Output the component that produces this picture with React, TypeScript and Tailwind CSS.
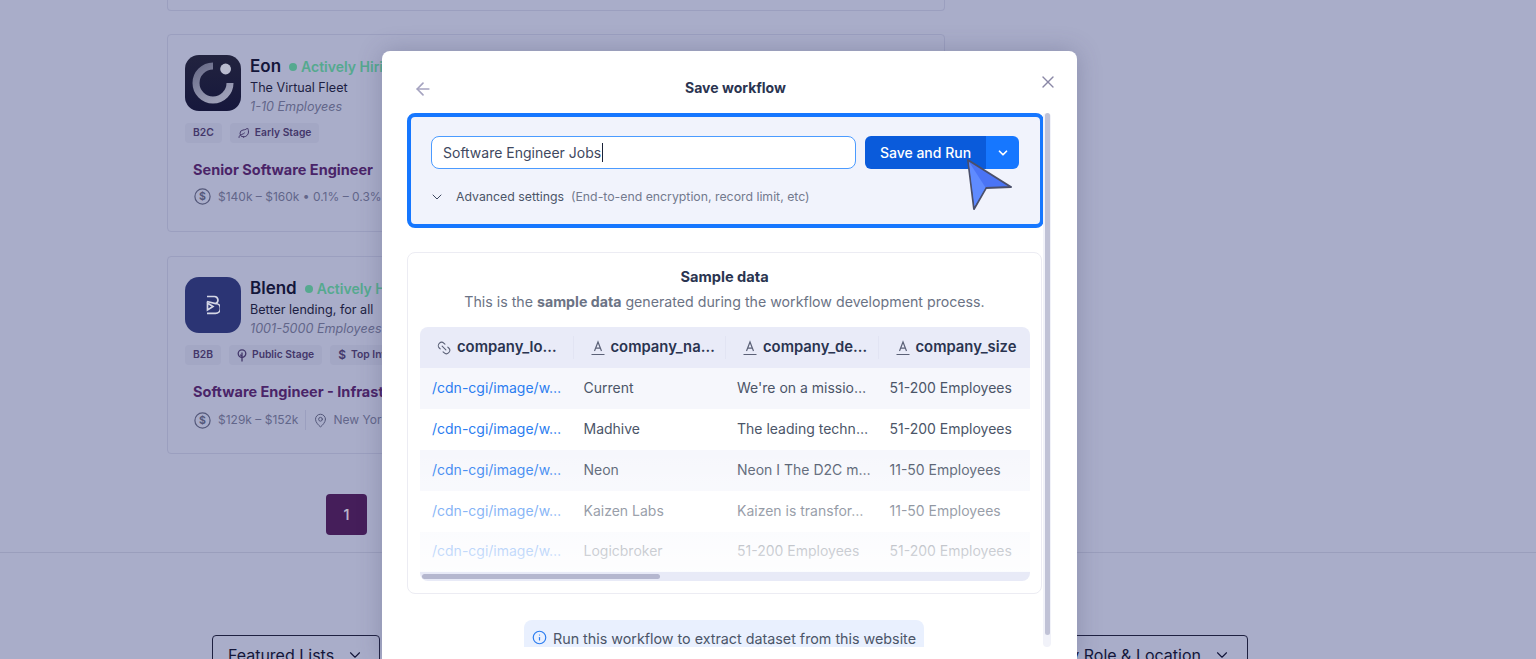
import { ChevronDown, X, ArrowLeft, Link2, Info, Leaf, MapPin } from "lucide-react";

const SANS = "font-['Inter',sans-serif]";
const MODAL = "font-['Inter','Noto_Sans',sans-serif]";

function DollarCircle() {
  return (
    <svg width="17" height="17" viewBox="0 0 17 17" className="shrink-0 text-[#54587a]">
      <circle cx="8.5" cy="8.5" r="7.6" fill="none" stroke="currentColor" strokeWidth="1.2" />
      <text x="8.5" y="12.2" textAnchor="middle" fontSize="10.5" fontWeight="700" fill="currentColor" fontFamily="Inter, sans-serif">$</text>
    </svg>
  );
}

function Tag({ children }: { children: React.ReactNode }) {
  return (
    <span className="flex h-5 items-center gap-[5px] rounded bg-[#a3a7c4] px-2 text-[10.3px] font-semibold text-[#43376a]">
      {children}
    </span>
  );
}

function EonLogo() {
  return (
    <div className="h-14 w-14 shrink-0 rounded-[14px] bg-gradient-to-b from-[#22233f] to-[#16173c]">
      <svg width="56" height="56" viewBox="0 0 56 56">
        <defs>
          <linearGradient id="eonRing" x1="0" y1="0" x2="0.6" y2="1">
            <stop offset="0" stopColor="#696b88" />
            <stop offset="1" stopColor="#9c9eb6" />
          </linearGradient>
        </defs>
        <path d="M45 28A17 17 0 1 1 28 11" fill="none" stroke="url(#eonRing)" strokeWidth="7" />
        <circle cx="40.6" cy="14" r="5.4" fill="#b9bbcf" />
      </svg>
    </div>
  );
}

function BlendLogo() {
  return (
    <div className="flex h-14 w-14 shrink-0 items-center justify-center rounded-[14px] bg-[#2b3474]">
      <svg width="14" height="20" viewBox="0 0 14 20" fill="none" stroke="#d5d7e6" strokeWidth="1.7">
        <path d="M1 1.5h7.5a3.6 3.6 0 0 1 1 7L1 6.5M9.5 8.5a4.8 4.8 0 0 1 0 9.8H1" />
        <path d="M1.5 8v7l5.5-3.5z" />
      </svg>
    </div>
  );
}

function TreeIcon() {
  return (
    <svg width="10" height="13" viewBox="0 0 10 13" fill="none" stroke="#43376a" strokeWidth="1.3">
      <circle cx="5" cy="4.6" r="3.8" />
      <path d="M5 3.4v9M3.2 5.6 5 7.4" />
    </svg>
  );
}

function JobCard({ logo, name, tagline, size, tags, title, meta }: {
  logo: React.ReactNode;
  name: string;
  tagline: string;
  size: string;
  tags: React.ReactNode;
  title: string;
  meta: React.ReactNode;
}) {
  return (
    <div className="h-full rounded border border-[#9b9fbf] px-[17px] pt-5">
      <div className="flex gap-[9px]">
        {logo}
        <div className="flex flex-col">
          <div className="flex items-center">
            <span className="text-[17px] leading-[23px] font-semibold text-[#14163a]">{name}</span>
            <span className="ml-2 h-2 w-2 rounded-full bg-[#55a98f]" />
            <span className="ml-1 text-sm leading-5 font-semibold whitespace-nowrap text-[#55a98f]">Actively Hiring</span>
          </div>
          <span className="text-[12.6px] leading-[19px] text-[#1c1e42]">{tagline}</span>
          <span className="text-[12.6px] leading-[19px] italic text-[#62668a]">{size}</span>
        </div>
      </div>
      <div className="mt-[7px] flex gap-2">{tags}</div>
      <div className="mt-[17px] ml-2 text-[14.5px] leading-5 font-bold whitespace-nowrap text-[#4a2468]">{title}</div>
      <div className="mt-2 ml-[9px] flex items-center gap-[7px] text-xs whitespace-nowrap text-[#62668a]">{meta}</div>
    </div>
  );
}

function LetterIcon() {
  return (
    <svg width="16" height="16" viewBox="0 0 16 16" fill="none" stroke="#5b6177" strokeWidth="1.2" className="shrink-0">
      <path d="M4.5 11 8 2l3.5 9M5.6 8.2h4.8M1.5 14.5h13" />
    </svg>
  );
}

const rows = [
  ["Current", "We're on a missio…", "51-200 Employees"],
  ["Madhive", "The leading techn…", "51-200 Employees"],
  ["Neon", "Neon I The D2C m…", "11-50 Employees"],
  ["Kaizen Labs", "Kaizen is transfor…", "11-50 Employees"],
  ["Logicbroker", "51-200 Employees", "51-200 Employees"],
];

function SampleTable() {
  return (
    <div className="relative mx-3 mt-[15px] w-[610px] overflow-hidden rounded-lg">
      <div className="grid h-[41px] grid-cols-4 items-center bg-[#e9ebf8] text-[14.8px] font-semibold whitespace-nowrap text-[#2a3450]">
        <div className="flex items-center gap-[5px] pl-4">
          <Link2 size={16} strokeWidth={1.6} className="rotate-45 text-[#5b6177]" />
          company_lo…
        </div>
        <div className="flex items-center gap-[5px] border-l border-[#e2e4f3] pl-4">
          <LetterIcon />
          company_na…
        </div>
        <div className="flex items-center gap-[5px] border-l border-[#e2e4f3] pl-4">
          <LetterIcon />
          company_de…
        </div>
        <div className="flex items-center gap-[5px] border-l border-[#e2e4f3] pl-4">
          <LetterIcon />
          company_size
        </div>
      </div>
      {rows.map((r, i) => (
        <div key={r[0]} className={`grid grid-cols-4 items-center pb-px text-sm text-[#4b5568] ${i === 4 ? "h-[39px]" : "h-[41px]"} ${i % 2 === 0 ? "bg-[#f6f7fc]" : "bg-white"}`}>
          <div className="pl-3 text-[#2b7df0]">/cdn-cgi/image/w…</div>
          <div className="pl-[11px]">{r[0]}</div>
          <div className="pl-3">{r[1]}</div>
          <div className="pl-3">{r[2]}</div>
        </div>
      ))}
      <div className="flex h-[10px] items-center bg-[#e8eaf7] px-0.5">
        <div className="h-[5px] w-[238px] rounded-full bg-[#b5b7cf]" />
      </div>
      <div className="pointer-events-none absolute inset-x-0 top-[123px] h-[122px] bg-gradient-to-b from-white/0 to-white/85" />
    </div>
  );
}

function Modal() {
  return (
    <div className={`absolute top-[51px] left-[382px] h-[608px] w-[695px] rounded-t-lg bg-white shadow-[0_0_24px_rgba(60,60,100,0.28)] ${MODAL}`}>
      <div className="relative flex h-[62px] items-center justify-center pt-[12px] pl-3">
        <ArrowLeft size={20} strokeWidth={2} className="absolute top-[28px] left-[31px] text-[#a5a3c0]" />
        <span className="text-sm font-bold text-[#2a3450]">Save workflow</span>
        <X size={20} strokeWidth={1.6} className="absolute top-[21px] right-[19px] text-[#8a87a6]" />
      </div>

      <div className="relative ml-[25px] h-[534px] w-[644px] overflow-hidden">
        <div className="h-[115px] w-[637px] rounded-lg border-4 border-[#1677ff] bg-[#f1f3fc] px-5 pt-[19px]">
          <div className="flex gap-[9px]">
            <div className="flex h-[33px] w-[425px] items-center rounded-lg border border-[#4b9bff] bg-white pl-[11px] text-sm text-[#3e4860]">
              Software Engineer Jobs
              <span className="ml-px h-[19px] w-px bg-[#1a2238]" />
            </div>
            <div className="flex h-[33px] w-[154px] overflow-hidden rounded-md text-sm font-medium text-white">
              <div className="flex flex-1 items-center justify-center bg-[#0a5bdb]">Save and Run</div>
              <div className="flex w-[33px] items-center justify-center bg-[#1677ff]">
                <ChevronDown size={14} strokeWidth={3} />
              </div>
            </div>
          </div>
          <div className="mt-[19px] flex items-center text-[12.3px] text-[#4b5568]">
            <ChevronDown size={16} strokeWidth={1.5} className="-ml-[2px] text-[#3e4860]" />
            <span className="ml-[11px]">Advanced settings</span>
            <span className="ml-[7px] text-[#737a8e]">(End-to-end encryption, record limit, etc)</span>
          </div>
        </div>

        <div className="mt-6 h-[342px] w-[635px] rounded-lg border border-[#ececf3] pt-[14px]">
          <div className="text-center text-[14.6px] leading-5 font-bold text-[#2a3450]">Sample data</div>
          <div className="mt-[5px] text-center text-[14.2px] leading-5 text-[#6b7385]">
            This is the <span className="font-bold">sample data</span> generated during the workflow development process.
          </div>
          <SampleTable />
        </div>

        <div className="mt-[26px] flex justify-center pr-[10px]">
          <div className="flex h-10 w-[400px] items-start justify-center gap-[6px] rounded-lg bg-[#e9f0fe] pt-2 text-[14.3px] whitespace-nowrap text-[#4b5568]">
            <Info size={15} strokeWidth={1.9} className="mt-[2px] text-[#2b7df0]" />
            Run this workflow to extract dataset from this website
          </div>
        </div>

        {/* modal scrollbar */}
        <div className="absolute top-0 right-0 h-full w-2 rounded-full bg-[#f1f2f9]">
          <div className="mx-auto h-[522px] w-[5px] rounded-full bg-[#c0c2d6]" />
        </div>
      </div>

      {/* demo cursor */}
      <svg width="48" height="54" viewBox="0 0 48 54" className="absolute top-[108px] left-[585px]">
        <path d="M1 1 L44 28 L19 29 L7 50 Z" fill="#4a74f5" stroke="#4a4f6a" strokeWidth="2" strokeLinejoin="round" />
        <path d="M1.8 2.5 L18.5 28.5 L7.5 47.5 Z" fill="#5f8bff" />
      </svg>
    </div>
  );
}

export default function App() {
  return (
    <div className={`relative h-[659px] overflow-hidden bg-[#a9adc9] ${SANS}`}>
      <div className="ml-[167px] w-[778px]">
        <div className="h-[11px] rounded-b border border-t-0 border-[#9b9fbf]" />
        <div className="mt-[23px] h-[198px]">
          <JobCard
            logo={<EonLogo />}
            name="Eon"
            tagline="The Virtual Fleet"
            size="1-10 Employees"
            tags={
              <>
                <Tag>B2C</Tag>
                <Tag><Leaf size={12} strokeWidth={2} />Early Stage</Tag>
              </>
            }
            title="Senior Software Engineer"
            meta={
              <>
                <DollarCircle />
                <span>$140k – $160k • 0.1% – 0.3%</span>
              </>
            }
          />
        </div>
        <div className="mt-6 h-[198px]">
          <JobCard
            logo={<BlendLogo />}
            name="Blend"
            tagline="Better lending, for all"
            size="1001-5000 Employees"
            tags={
              <>
                <Tag>B2B</Tag>
                <Tag><TreeIcon />Public Stage</Tag>
                <Tag><span className="text-[12px]">$</span>Top Investors</Tag>
              </>
            }
            title="Software Engineer - Infrastructure"
            meta={
              <>
                <DollarCircle />
                <span>$129k – $152k</span>
                <span className="h-5 w-px bg-[#9b9fbf]" />
                <MapPin size={15} strokeWidth={1.6} className="mr-[-2px] text-[#54587a]" />
                <span>New York</span>
              </>
            }
          />
        </div>
        <div className="mt-10 ml-[159px] flex h-[41px] w-[41px] items-center justify-center rounded bg-[#451e5a] text-sm font-semibold text-[#b9b3c9]">
          1
        </div>
      </div>

      <div className="mt-[17px] border-t border-[#9a9ebc]" />

      <div className="mt-[82px] mr-[288px] ml-[212px] flex justify-between text-base leading-6 text-[#14163a]">
        <div className="flex h-10 w-[168px] items-start justify-center gap-3 rounded border border-[#1e2040] pt-[7px]">
          Featured Lists
          <ChevronDown size={18} strokeWidth={1.5} className="mt-[3px]" />
        </div>
        <div className="flex h-10 w-[280px] items-start justify-end gap-3 rounded border border-[#1e2040] pt-[7px] pr-4">
          Jobs by Role &amp; Location
          <ChevronDown size={18} strokeWidth={1.5} className="mt-[3px]" />
        </div>
      </div>

      <Modal />
    </div>
  );
}
